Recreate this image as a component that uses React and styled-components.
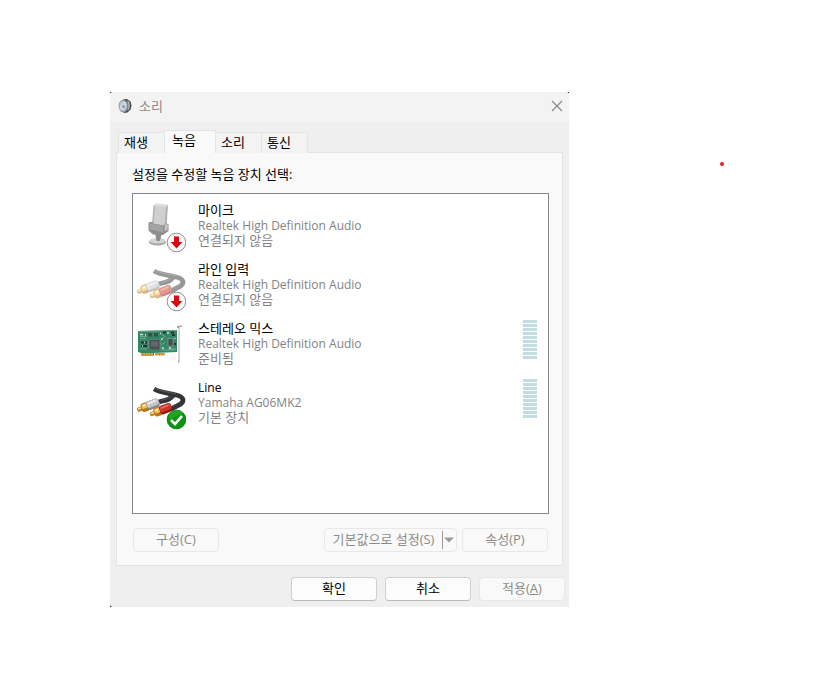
import { useState } from "react";
import styled, { createGlobalStyle } from "styled-components";

const GlobalStyle = createGlobalStyle`
  * {
    box-sizing: border-box;
  }
  body {
    margin: 0;
    background: #fff;
    color: #000;
    font-family: "Open Sans", "Noto Sans CJK KR", sans-serif;
    font-size: 13px;
    line-height: 15px;
  }
  button {
    font: inherit;
    color: inherit;
  }
`;

const Desktop = styled.main`
  position: relative;
  padding: 92px 266px 92px 110px;
`;

const RedDot = styled.span`
  position: absolute;
  top: 162px;
  left: 720px;
  width: 4px;
  height: 4px;
  border-radius: 2px;
  background: #ed1c24;
`;

const Dialog = styled.section`
  min-width: 459px;
  background: #222;
`;

const Frame = styled.div`
  overflow: hidden;
  border-radius: 3px 3px 0 3px;
  background: #efefef;
`;

const TitleBar = styled.header`
  display: flex;
  align-items: center;
  gap: 7px;
  height: 30px;
  padding: 0 5px 2px 8px;
  background: #f3f3f3;
  color: #8b8b8b;
`;

const Title = styled.h1`
  flex: 1;
  margin: 0;
  font-size: 13px;
  font-weight: 400;
`;

const CloseButton = styled.button`
  display: flex;
  padding: 0;
  border: 0;
  background: none;
`;

const Body = styled.div`
  padding: 8px 6px 0;
`;

const Tabs = styled.div`
  display: flex;
  align-items: flex-end;
  height: 23px;
  padding-left: 2px;
`;

const Tab = styled.button`
  position: relative;
  width: ${(p) => (p.$active ? 52 : 47)}px;
  height: ${(p) => (p.$active ? 23 : 21)}px;
  margin-right: -1px;
  padding: 0 0 ${(p) => (p.$active ? 3 : 1)}px ${(p) => (p.$active ? 7 : 5)}px;
  border: 1px solid #e4e4e4;
  border-bottom: 0;
  background: ${(p) => (p.$active ? "#f9f9f9" : "#f3f3f3")};
  text-align: left;
  z-index: ${(p) => (p.$active ? 1 : 0)};
`;

const Panel = styled.div`
  margin-top: -1px;
  padding: 14px 13px 13px 15px;
  border: 1px solid #e4e4e4;
  background: #f9f9f9;
`;

const Prompt = styled.p`
  margin: 0 0 11px;
`;

const DeviceList = styled.ul`
  min-height: 321px;
  margin: 0;
  padding: 8px 11px 8px 3px;
  border: 1px solid #828790;
  background: #fff;
  list-style: none;
`;

const Device = styled.li`
  display: flex;
  align-items: flex-start;
  height: 59px;
`;

const DeviceText = styled.div`
  flex: 1;
  margin-left: 12px;
  padding-top: 1px;
`;

const DeviceLine = styled.div`
  height: 15px;
  color: ${(p) => (p.$strong ? "#000" : "#838383")};
  white-space: nowrap;
`;

const Latin = styled.span`
  font-size: 12px;
`;

const Meter = styled.div`
  display: flex;
  flex-direction: column;
  gap: 1px;
  width: 14px;
`;

const MeterBar = styled.span`
  height: 3px;
  background: #c3dce1;
`;

const ButtonRow = styled.div`
  display: flex;
  gap: 5px;
  margin-top: 14px;
  padding: 0 1px;
`;

const Footer = styled.footer`
  display: flex;
  justify-content: flex-end;
  gap: 8px;
  padding: 11px 4px 6px;
`;

const Button = styled.button`
  width: 86px;
  height: 24px;
  padding: 0 0 2px;
  border: 1px solid #d0d0d0;
  border-bottom-color: #bababa;
  border-radius: 4px;
  background: #fdfdfd;
  &:disabled {
    border-color: #e8e8e8;
    background: #f9f9f9;
    color: #8b8b8b;
  }
`;

const SplitButton = styled.div`
  display: flex;
  align-items: center;
  width: 133px;
  height: 24px;
  margin-left: auto;
  border: 1px solid #e8e8e8;
  border-radius: 4px;
`;

const SplitMain = styled.button`
  flex: 1;
  height: 18px;
  padding: 0 0 2px;
  border: 0;
  border-right: 1px solid #9a9a9a;
  background: none;
  color: #8b8b8b;
  white-space: nowrap;
`;

const SplitArrow = styled.button`
  display: flex;
  padding: 0 2px 0 1px;
  border: 0;
  background: none;
`;

const SpeakerIcon = () => (
  <svg width="14" height="16" viewBox="0 0 14 16" aria-hidden="true">
    <path d="M5 1.500l4-.5 3.500 2.500 1 4-1 4-3 3-4 .5z" fill="#3f4548" />
    <path d="M9.500 2l2 2 .5 4-1 3.500-1.500 1.500z" fill="#a9adb0" />
    <ellipse cx="5.500" cy="8" rx="4.800" ry="6.300" fill="#808b91" />
    <ellipse cx="5.200" cy="8" rx="3.800" ry="5.300" fill="#bccbd2" />
    <path d="M2 10l5-6M3 12l5-6" stroke="#e8f0f3" strokeWidth="1" />
    <circle cx="5.500" cy="8.500" r="1.500" fill="#8ca2ab" />
  </svg>
);

const DownBadge = () => (
  <g>
    <circle cx="40.500" cy="40.500" r="9.300" fill="#fdfdfd" stroke="#8d8d8d" />
    <path d="M38 34.500h5v5.500h3.500l-6 6.500-6-6.500H38z" fill="#d90b12" />
  </g>
);

const CheckBadge = () => (
  <g>
    <circle cx="40.500" cy="40.500" r="9.400" fill="#0b9412" stroke="#057a0b" strokeWidth=".8" />
    <path d="M33 35a9 9 0 0 1 15 0q-7 1-15 6z" fill="#3db33f" opacity=".45" />
    <path d="M35 41l4 4 7-8" fill="none" stroke="#fff" strokeWidth="2.600" />
  </g>
);

const MicIcon = () => (
  <svg width="50" height="52" viewBox="0 0 50 52" aria-hidden="true">
    <ellipse cx="21.500" cy="40" rx="8.500" ry="3.600" fill="#a6a6a6" />
    <ellipse cx="21.500" cy="38.800" rx="8" ry="2.800" fill="#d4d4d4" />
    <path d="M19 31h7l-2 7.500q-2 1-3.500 0z" fill="#8d8d8d" />
    <path d="M17.500 3.500l3-2L32 3l-1.500 22L16 23z" fill="#b0b0b0" />
    <path d="M19 3.500l11 1.500-1.500 19-11-2z" fill="#d0d0d0" />
    <path d="M17.500 3.500l3-2L32 3l-2 2z" fill="#e2e2e2" />
    <path d="M12.500 20.500l4-1 .5 2 11 2 1-2 3.500.5v7l-5.500 4-10-.5-4.500-4z" fill="#8f8f8f" />
    <path d="M13.500 21l14 3.200-.5 6-13.500-2.700z" fill="#a3a3a3" />
    <path d="M29 22l3 .5-.5 5.500-3 1z" fill="#c4c4c4" />
    <DownBadge />
  </svg>
);

const Plug = ({ x, y, light, color, dark }) => (
  <g transform={`translate(${x} ${y}) rotate(-21)`}>
    <rect x="-.5" y="-2.200" width="7" height="4.400" rx="1.800" fill="#bd7c1b" />
    <rect x=".5" y="-1.600" width="5" height="1.700" rx=".8" fill="#f6d57f" />
    <rect x="4" y="-4.500" width="7.500" height="9" rx="2.500" fill="#b87617" />
    <rect x="4.800" y="-3.600" width="6" height="4.700" rx="1.500" fill="#efc158" />
    <rect x="6" y="-3" width="3" height="1.800" rx=".9" fill="#fff0bd" />
    <rect x="10" y="-4.500" width="12.500" height="9" rx="2.500" fill={dark} />
    <rect x="10.300" y="-4.200" width="12" height="6.500" rx="2" fill={color} />
    <rect x="11.500" y="-3.300" width="9.500" height="2" rx="1" fill={light} />
    <path d="M14-4.300v8.600M17-4.300v8.600M20-4.300v8.600" stroke={dark} strokeWidth=".5" opacity=".45" />
  </g>
);

const CableIcon = ({ connected }) => (
  <svg width="50" height="52" viewBox="0 0 50 52" aria-hidden="true">
    <g opacity={connected ? 1 : 0.5}>
      <path
        d="M18 10C24 13.500 31 14 40 16C49 18 48 22.500 44 25.500L35 30M23 23C29 20.500 32 23 37 16.500"
        fill="none"
        stroke="#323437"
        strokeWidth="4.800"
      />
      <path
        d="M19 9.500C25 12.500 33 13 40 15M25 21.500C29 20 32 20.500 35 17.500M36 27.500L44 23"
        fill="none"
        stroke="#55585b"
        strokeWidth="1"
      />
      <Plug x={1.7} y={31} light="#f4f4f6" color="#cbccd0" dark="#85878f" />
      <Plug x={14.5} y={35.5} light="#ef7163" color="#d0372d" dark="#8f1712" />
    </g>
    {connected ? <CheckBadge /> : <DownBadge />}
  </svg>
);

const CardIcon = () => (
  <svg width="50" height="52" viewBox="0 0 50 52" aria-hidden="true">
    <path d="M2 11l39-1v22l-23 1v2.500H5V33l-3-1z" fill="#348666" />
    <path d="M2.500 11.500l38-1" stroke="#65a58a" />
    <path d="M5 33h12v2.800H5zM19 33h10v2.300H19z" fill="#d9a046" />
    <path d="M7 33v3M9.500 33v3M12 33v3M14.500 33v3M21 33v3M23.500 33v3M26 33v3" stroke="#9c6b22" strokeWidth=".5" />
    <path
      d="M4 16.500h7M4 18.500h6M4 29h7M26 14l3 3M25 20l4-4M25 25l4-3M32 29h8M25 30h14"
      stroke="#79b89b"
      strokeWidth=".8"
    />
    <path d="M12 21h13M12 23.500h13M12 26h13M12 28h13M15 19.500v10.500M18 19.500v10.500M21 19.500v10.500" stroke="#b3c2bb" strokeWidth=".5" />
    <rect x="13.500" y="20" width="10" height="9.500" fill="#4c5053" />
    <rect x="15" y="21.500" width="7" height="5" fill="#66696b" />
    <rect x="32" y="18.500" width="5" height="7.500" fill="#464d50" stroke="#9eb4a9" strokeWidth=".5" />
    <rect x="12" y="13" width="4" height="3.500" fill="#3f4d48" />
    <rect x="18" y="13" width="4" height="3.500" fill="#3f4d48" />
    <path d="M5 22.500h6M5 26h6M27 12.500h3M35 12.500h3M36 15h3M38 24h2" stroke="#23352e" strokeWidth="1.800" />
    <path
      d="M4 14.500h3M9 15h1M24 13.500h1M31 13h2M8 22.500h1M6 26h1M26 18v2M39 18v1M26 28h2M33 28h2"
      stroke="#dae2d7"
      strokeWidth="1.300"
    />
    <path d="M41 6l5-.5v1.500h-2.500V42l-1.500 1V8h-1z" fill="#a0a4a5" />
    <path d="M42.500 8v33" stroke="#dfe1e1" strokeWidth=".8" />
  </svg>
);

const devices = [
  { name: "마이크", driver: "Realtek High Definition Audio", status: "연결되지 않음", icon: <MicIcon /> },
  { name: "라인 입력", driver: "Realtek High Definition Audio", status: "연결되지 않음", icon: <CableIcon /> },
  { name: "스테레오 믹스", driver: "Realtek High Definition Audio", status: "준비됨", icon: <CardIcon />, meter: true },
  { name: <Latin>Line</Latin>, driver: "Yamaha AG06MK2", status: "기본 장치", icon: <CableIcon connected />, meter: true },
];

const tabs = ["재생", "녹음", "소리", "통신"];

const App = () => {
  const [active, setActive] = useState("녹음");

  return (
    <Desktop>
      <GlobalStyle />
      <Dialog role="dialog" aria-labelledby="title">
        <Frame>
          <TitleBar>
            <SpeakerIcon />
            <Title id="title">소리</Title>
            <CloseButton aria-label="닫기">
              <svg width="14" height="14" viewBox="0 0 14 14">
                <path d="M2 2l10 10M12 2L2 12" stroke="#858585" strokeWidth="1.100" />
              </svg>
            </CloseButton>
          </TitleBar>
          <Body>
            <Tabs role="tablist">
              {tabs.map((t) => (
                <Tab key={t} role="tab" aria-selected={t === active} $active={t === active} onClick={() => setActive(t)}>
                  {t}
                </Tab>
              ))}
            </Tabs>
            <Panel role="tabpanel">
              <Prompt id="prompt">설정을 수정할 녹음 장치 선택:</Prompt>
              <DeviceList aria-labelledby="prompt">
                {devices.map((d, i) => (
                  <Device key={i}>
                    {d.icon}
                    <DeviceText>
                      <DeviceLine $strong>{d.name}</DeviceLine>
                      <DeviceLine>
                        <Latin>{d.driver}</Latin>
                      </DeviceLine>
                      <DeviceLine>{d.status}</DeviceLine>
                    </DeviceText>
                    {d.meter && (
                      <Meter>
                        {Array.from({ length: 10 }, (_, n) => (
                          <MeterBar key={n} />
                        ))}
                      </Meter>
                    )}
                  </Device>
                ))}
              </DeviceList>
              <ButtonRow>
                <Button disabled>구성(C)</Button>
                <SplitButton>
                  <SplitMain disabled>기본값으로 설정(S)</SplitMain>
                  <SplitArrow disabled aria-label="기본값 옵션">
                    <svg width="10" height="6" viewBox="0 0 10 6">
                      <path d="M0 .5h10L5 5.500z" fill="#9a9a9a" />
                    </svg>
                  </SplitArrow>
                </SplitButton>
                <Button disabled>속성(P)</Button>
              </ButtonRow>
            </Panel>
          </Body>
          <Footer>
            <Button>확인</Button>
            <Button>취소</Button>
            <Button disabled>
              적용(<u>A</u>)
            </Button>
          </Footer>
        </Frame>
      </Dialog>
      <RedDot />
    </Desktop>
  );
};

export default App;
